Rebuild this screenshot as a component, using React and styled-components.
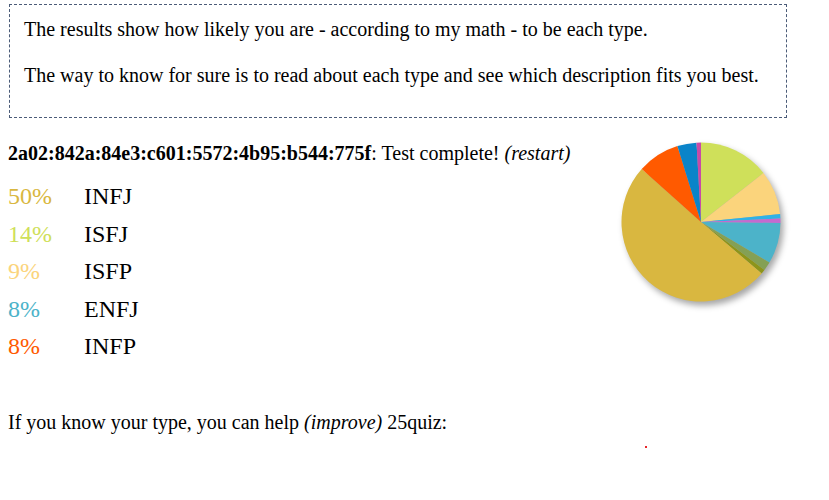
import React from "react";
import styled, { createGlobalStyle } from "styled-components";

const slices = [
  { value: 14.4, color: "#cfe05a" },
  { value: 9, color: "#fbd47c" },
  { value: 0.9, color: "#2fb2e6" },
  { value: 0.9, color: "#c46ad0" },
  { value: 8.3, color: "#4cb3c9" },
  { value: 1.8, color: "#84a055" },
  { value: 0.9, color: "#8d951a" },
  { value: 50.4, color: "#d9b740" },
  { value: 8.6, color: "#ff5a00" },
  { value: 3.9, color: "#0a84c9" },
  { value: 0.9, color: "#c94aa6" },
];

const results = [
  { pct: "50%", type: "INFJ", color: "#d9b740" },
  { pct: "14%", type: "ISFJ", color: "#cfe05a" },
  { pct: "9%", type: "ISFP", color: "#fbd47c" },
  { pct: "8%", type: "ENFJ", color: "#4cb3c9" },
  { pct: "8%", type: "INFP", color: "#ff5a00" },
];

const GlobalStyle = createGlobalStyle`
  body {
    margin: 4px 8px 8px;
    background: #fff;
    color: #000;
    font-family: "Liberation Serif", "Times New Roman", serif;
  }
`;

const Notice = styled.div`
  width: 778px;
  box-sizing: border-box;
  margin-left: 1px;
  padding: 11px 14px 9px;
  border: 1px dashed #4b5b78;
  font-size: 20px;
  line-height: 26px;
  p {
    margin: 0 0 20px;
  }
`;

const Results = styled.div`
  display: flex;
  justify-content: space-between;
  align-items: flex-start;
  width: 785px;
  margin-top: 22px;
`;

const Left = styled.div`
  display: flex;
  flex-direction: column;
`;

const Status = styled.div`
  font-size: 20px;
  line-height: 26px;
  b {
    font-weight: bold;
  }
  i {
    font-style: italic;
  }
`;

const Rows = styled.div`
  margin-top: 12px;
`;

const Row = styled.div`
  display: flex;
  font-size: 24px;
  line-height: 37.5px;
`;

const Pct = styled.span`
  width: 76px;
  color: ${(p) => p.$color};
`;

const Type = styled.span`
  color: #000;
`;

const PieBox = styled.div`
  margin-top: 2px;
  svg {
    display: block;
    filter: drop-shadow(3px 4px 3px rgba(0, 0, 0, 0.35));
  }
`;

const Help = styled.p`
  margin: 43px 0 0;
  font-size: 20px;
  line-height: 26px;
`;

const DotRow = styled.div`
  padding: 11px 0 0 637px;
`;

const Dot = styled.span`
  display: block;
  width: 2px;
  height: 2px;
  background: #e8262b;
`;

const Pie = ({ cx, cy, r }) => {
  let acc = 0;
  const total = slices.reduce((s, x) => s + x.value, 0);
  return (
    <svg width="172" height="172" viewBox="0 0 172 172">
      {slices.map((s, i) => {
        const a0 = (acc / total) * Math.PI * 2;
        acc += s.value;
        const a1 = (acc / total) * Math.PI * 2;
        const x0 = cx + r * Math.sin(a0);
        const y0 = cy - r * Math.cos(a0);
        const x1 = cx + r * Math.sin(a1);
        const y1 = cy - r * Math.cos(a1);
        const large = a1 - a0 > Math.PI ? 1 : 0;
        return (
          <path
            key={i}
            d={`M${cx},${cy} L${x0},${y0} A${r},${r} 0 ${large} 1 ${x1},${y1} Z`}
            fill={s.color}
          />
        );
      })}
    </svg>
  );
};

const App = () => {
  return (
    <>
      <GlobalStyle />
      <Notice>
        <p>
          The results show how likely you are - according to my math - to be
          each type.
        </p>
        <p>
          The way to know for sure is to read about each type and see which
          description fits you best.
        </p>
      </Notice>
      <Results>
        <Left>
          <Status>
            <b>2a02:842a:84e3:c601:5572:4b95:b544:775f</b>: Test complete!{" "}
            <i>(restart)</i>
          </Status>
          <Rows>
            {results.map((r) => (
              <Row key={r.type}>
                <Pct $color={r.color}>{r.pct}</Pct>
                <Type>{r.type}</Type>
              </Row>
            ))}
          </Rows>
        </Left>
        <PieBox>
          <Pie cx={80} cy={80} r={79.5} />
        </PieBox>
      </Results>
      <Help>
        If you know your type, you can help <i>(improve)</i> 25quiz:
      </Help>
      <DotRow>
        <Dot />
      </DotRow>
    </>
  );
};

export default App;
